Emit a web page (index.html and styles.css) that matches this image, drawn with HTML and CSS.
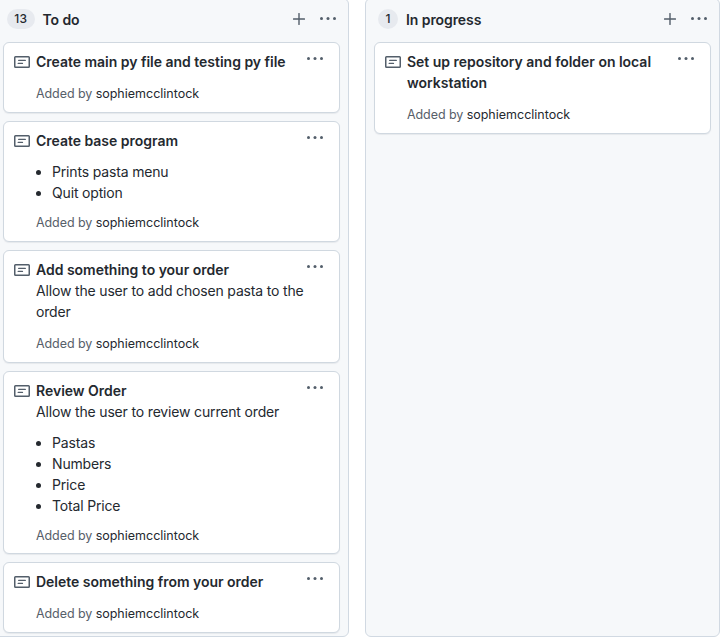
FILE: index.html
```html
<!DOCTYPE html>
<html lang="en">
<head>
<meta charset="utf-8">
<title>Project board</title>
<link rel="stylesheet" href="styles.css">
</head>
<body>
<svg class="defs" aria-hidden="true">
  <symbol id="note" viewBox="0 0 16 16"><rect x=".75" y="2.75" width="14.5" height="10.5" rx=".8" fill="none" stroke="currentColor" stroke-width="1.5"/><path d="M4.7 6.4h6.6M4.2 9.4h4.3" fill="none" stroke="currentColor" stroke-width="1.3" stroke-linecap="round"/></symbol>
  <symbol id="dots" viewBox="0 0 18 4"><circle cx="1.5" cy="1.5" r="1.5"/><circle cx="8" cy="1.5" r="1.5"/><circle cx="14.5" cy="1.5" r="1.5"/></symbol>
  <symbol id="plus" viewBox="0 0 12 12"><path d="M6 .6v10.8M.6 6h10.8" fill="none" stroke="currentColor" stroke-width="1.4" stroke-linecap="round"/></symbol>
</svg>
<main class="board">
  <section class="column">
    <header class="column-head"><span class="count">13</span><h3>To do</h3><svg class="plus"><use href="#plus"/></svg><svg class="dots"><use href="#dots"/></svg></header>
    <article class="card"><svg class="note"><use href="#note"/></svg><div class="body"><p class="title">Create main py file and testing py file</p><p class="meta">Added by <a>sophiemcclintock</a></p></div><svg class="dots"><use href="#dots"/></svg></article>
    <article class="card"><svg class="note"><use href="#note"/></svg><div class="body"><p class="title">Create base program</p><ul><li>Prints pasta menu</li><li>Quit option</li></ul><p class="meta">Added by <a>sophiemcclintock</a></p></div><svg class="dots"><use href="#dots"/></svg></article>
    <article class="card"><svg class="note"><use href="#note"/></svg><div class="body"><p class="title">Add something to your order</p><p>Allow the user to add chosen pasta to the<br>order</p><p class="meta">Added by <a>sophiemcclintock</a></p></div><svg class="dots"><use href="#dots"/></svg></article>
    <article class="card"><svg class="note"><use href="#note"/></svg><div class="body"><p class="title">Review Order</p><p>Allow the user to review current order</p><ul><li>Pastas</li><li>Numbers</li><li>Price</li><li>Total Price</li></ul><p class="meta">Added by <a>sophiemcclintock</a></p></div><svg class="dots"><use href="#dots"/></svg></article>
    <article class="card"><svg class="note"><use href="#note"/></svg><div class="body"><p class="title">Delete something from your order</p><p class="meta">Added by <a>sophiemcclintock</a></p></div><svg class="dots"><use href="#dots"/></svg></article>
  </section>
  <section class="column">
    <header class="column-head"><span class="count">1</span><h3>In progress</h3><svg class="plus"><use href="#plus"/></svg><svg class="dots"><use href="#dots"/></svg></header>
    <article class="card"><svg class="note"><use href="#note"/></svg><div class="body"><p class="title">Set up repository and folder on local<br>workstation</p><p class="meta">Added by <a>sophiemcclintock</a></p></div><svg class="dots"><use href="#dots"/></svg></article>
  </section>
</main>
</body>
</html>
```
FILE: styles.css
```css
* { box-sizing: border-box; }
body {
  margin: 0;
  height: 639px;
  overflow: hidden;
  background: #fff;
  color: #24292f;
  font: 14px/21px Inter, "Liberation Sans", sans-serif;
  letter-spacing: -.165px;
}
.defs { position: absolute; width: 0; height: 0; }
h3, p, ul { margin: 0; font-size: 14px; }
svg { display: block; flex: none; fill: currentColor; color: #535e6a; }

.board {
  display: flex;
  gap: 16px;
  width: 726px;
  height: 639px;
  margin: -2px 0 0 -6px;
}
.column {
  flex: none;
  width: 355px;
  display: flex;
  flex-direction: column;
  gap: 8px;
  padding: 0 8px;
  background: #f6f8fa;
  border: 1px solid #d1d9e2;
  border-radius: 6px;
}
.column-head {
  display: flex;
  align-items: center;
  height: 35px;
  padding: 6px 2px 0 4px;
}
.count {
  min-width: 20px;
  height: 20px;
  margin-top: -1px;
  padding: 0 7.3px;
  border-radius: 10px;
  background: #e7eaef;
  font-size: 12px;
  font-weight: 500;
  line-height: 20px;
  letter-spacing: .2px;
  text-align: center;
}
h3 { flex: 1; margin-left: 8px; font-weight: 600; letter-spacing: -.08px; }
.plus { width: 12px; height: 12px; margin: -2px 15px 0 0; }
.dots { width: 18px; height: 4px; }
.column-head .dots { margin-top: -2px; }

.card {
  display: flex;
  align-items: flex-start;
  width: 337px;
  padding: 8px 14px 8px 10px;
  background: #fff;
  border: 1px solid #d0d8e0;
  border-radius: 6px;
  box-shadow: 0 1px 1px rgba(140, 149, 159, .15);
}
.note { width: 16px; height: 16px; margin: 3px 6px 0 0; }
.body { flex: 1; min-width: 0; white-space: nowrap; }
.card .dots { margin-top: 6px; }
.title { font-weight: 600; letter-spacing: -.02px; }
ul { margin-top: 10px; padding-left: 16px; }
.body .meta { margin-top: 11px; font-size: 12.5px; color: #57606a; letter-spacing: -.08px; }
.body ul + .meta { margin: 9px 0 -.5px; }
.meta a { color: #24292f; letter-spacing: 0; }
```
